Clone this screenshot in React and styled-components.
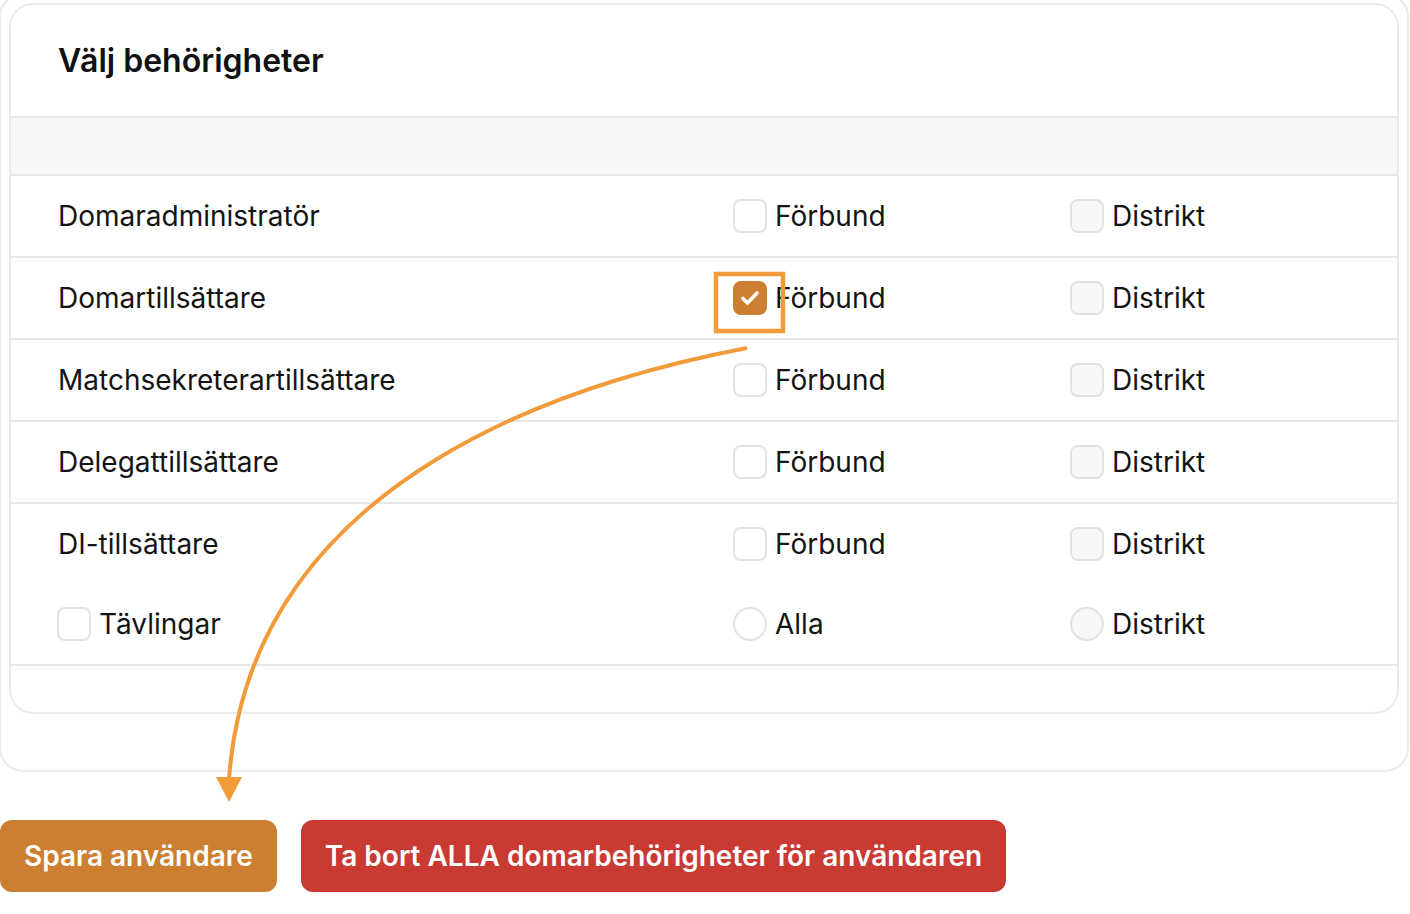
import React from "react";
import styled, { createGlobalStyle } from "styled-components";

const ORANGE = "#cc7e31";
const RED = "#c93a33";
const MARK = "#f29b3a";

const roles = [
  { name: "Domaradministratör", checked: false },
  { name: "Domartillsättare", checked: true },
  { name: "Matchsekreterartillsättare", checked: false },
  { name: "Delegattillsättare", checked: false },
  { name: "DI-tillsättare", checked: false, last: true },
];

export default function App() {
  return (
    <Page>
      <GlobalStyle />
      <Shell>
        <Card>
          <Header>
            <Title>Välj behörigheter</Title>
          </Header>
          <Band />
          {roles.map((r) => (
            <Row key={r.name} $noLine={r.last}>
              <Label>{r.name}</Label>
              <Option>
                <Box $checked={r.checked}>
                  {r.checked && (
                    <svg width="24" height="24" viewBox="0 0 24 24">
                      <path d="M5 12.5l4.5 4.5 9.5-10" fill="none" stroke="#fff" strokeWidth="3.6" strokeLinecap="round" strokeLinejoin="round" />
                    </svg>
                  )}
                </Box>
                Förbund
              </Option>
              <Option>
                <Box $muted />
                Distrikt
              </Option>
            </Row>
          ))}
          <Row>
            <Option>
              <Box />
              Tävlingar
            </Option>
            <Option>
              <Box $round />
              Alla
            </Option>
            <Option>
              <Box $round $muted />
              Distrikt
            </Option>
          </Row>
          <Footer />
        </Card>
      </Shell>
      <Actions>
        <Button $bg={ORANGE}>Spara användare</Button>
        <Button $bg={RED}>Ta bort ALLA domarbehörigheter för användaren</Button>
      </Actions>
      <Overlay width="1410" height="914" viewBox="0 0 1410 914">
        <rect x="716" y="274" width="67" height="57" fill="none" stroke={MARK} strokeWidth="4.5" />
        <path d="M747 348 C590 378 250 470 229 780" fill="none" stroke={MARK} strokeWidth="4" />
        <polygon points="216,777 242,777 229,802" fill={MARK} />
      </Overlay>
    </Page>
  );
}

const GlobalStyle = createGlobalStyle`
  body {
    margin: 0;
    background: #fff;
    font-family: Inter, "Noto Sans", sans-serif;
    color: #141414;
    overflow: hidden;
  }
`;

const Page = styled.div`
  position: relative;
  display: flow-root;
  width: 1410px;
  height: 914px;
`;

const Shell = styled.div`
  box-sizing: border-box;
  width: 1410px;
  margin: -7px 0 0 -1px;
  padding: 8px 8px 56px;
  border: 2px solid #ebebeb;
  border-radius: 24px;
`;

const Card = styled.div`
  border: 2px solid #ebebeb;
  border-radius: 24px;
  overflow: hidden;
  background: #fff;
`;

const Header = styled.div`
  height: 111px;
  display: flex;
  align-items: center;
  padding: 0 47px;
`;

const Title = styled.h2`
  margin: 0;
  font-size: 32px;
  font-weight: 600;
  color: #111;
`;

const Band = styled.div`
  height: 56px;
  background: #f8f8f8;
  border-top: 2px solid #e6e6e6;
  border-bottom: 2px solid #e6e6e6;
`;

const Row = styled.div`
  display: grid;
  grid-template-columns: 676px 337px 1fr;
  align-items: center;
  height: 80px;
  padding: 0 46px;
  border-bottom: ${(p) => (p.$noLine ? "none" : "2px solid #e6e6e6")};
`;

const Label = styled.span`
  font-size: 28px;
  padding-left: 1px;
`;

const Option = styled.label`
  display: flex;
  align-items: center;
  gap: 8px;
  font-size: 28px;
`;

const Box = styled.span`
  box-sizing: border-box;
  width: 34px;
  height: 34px;
  display: flex;
  align-items: center;
  justify-content: center;
  border: 2px solid ${(p) => (p.$checked ? ORANGE : "#e2e2e2")};
  border-radius: ${(p) => (p.$round ? "50%" : "8px")};
  background: ${(p) => (p.$checked ? ORANGE : p.$muted ? "#f7f7f7" : "#fff")};
`;

const Footer = styled.div`
  height: 46px;
`;

const Actions = styled.div`
  display: flex;
  gap: 24px;
  margin-top: 48px;
`;

const Button = styled.button`
  height: 72px;
  padding: 0 24px;
  border: none;
  border-radius: 12px;
  background: ${(p) => p.$bg};
  color: #fff;
  font-family: Inter, "Noto Sans", sans-serif;
  font-size: 28px;
  font-weight: 600;
`;

const Overlay = styled.svg`
  position: absolute;
  top: 0;
  left: 0;
  pointer-events: none;
`;
